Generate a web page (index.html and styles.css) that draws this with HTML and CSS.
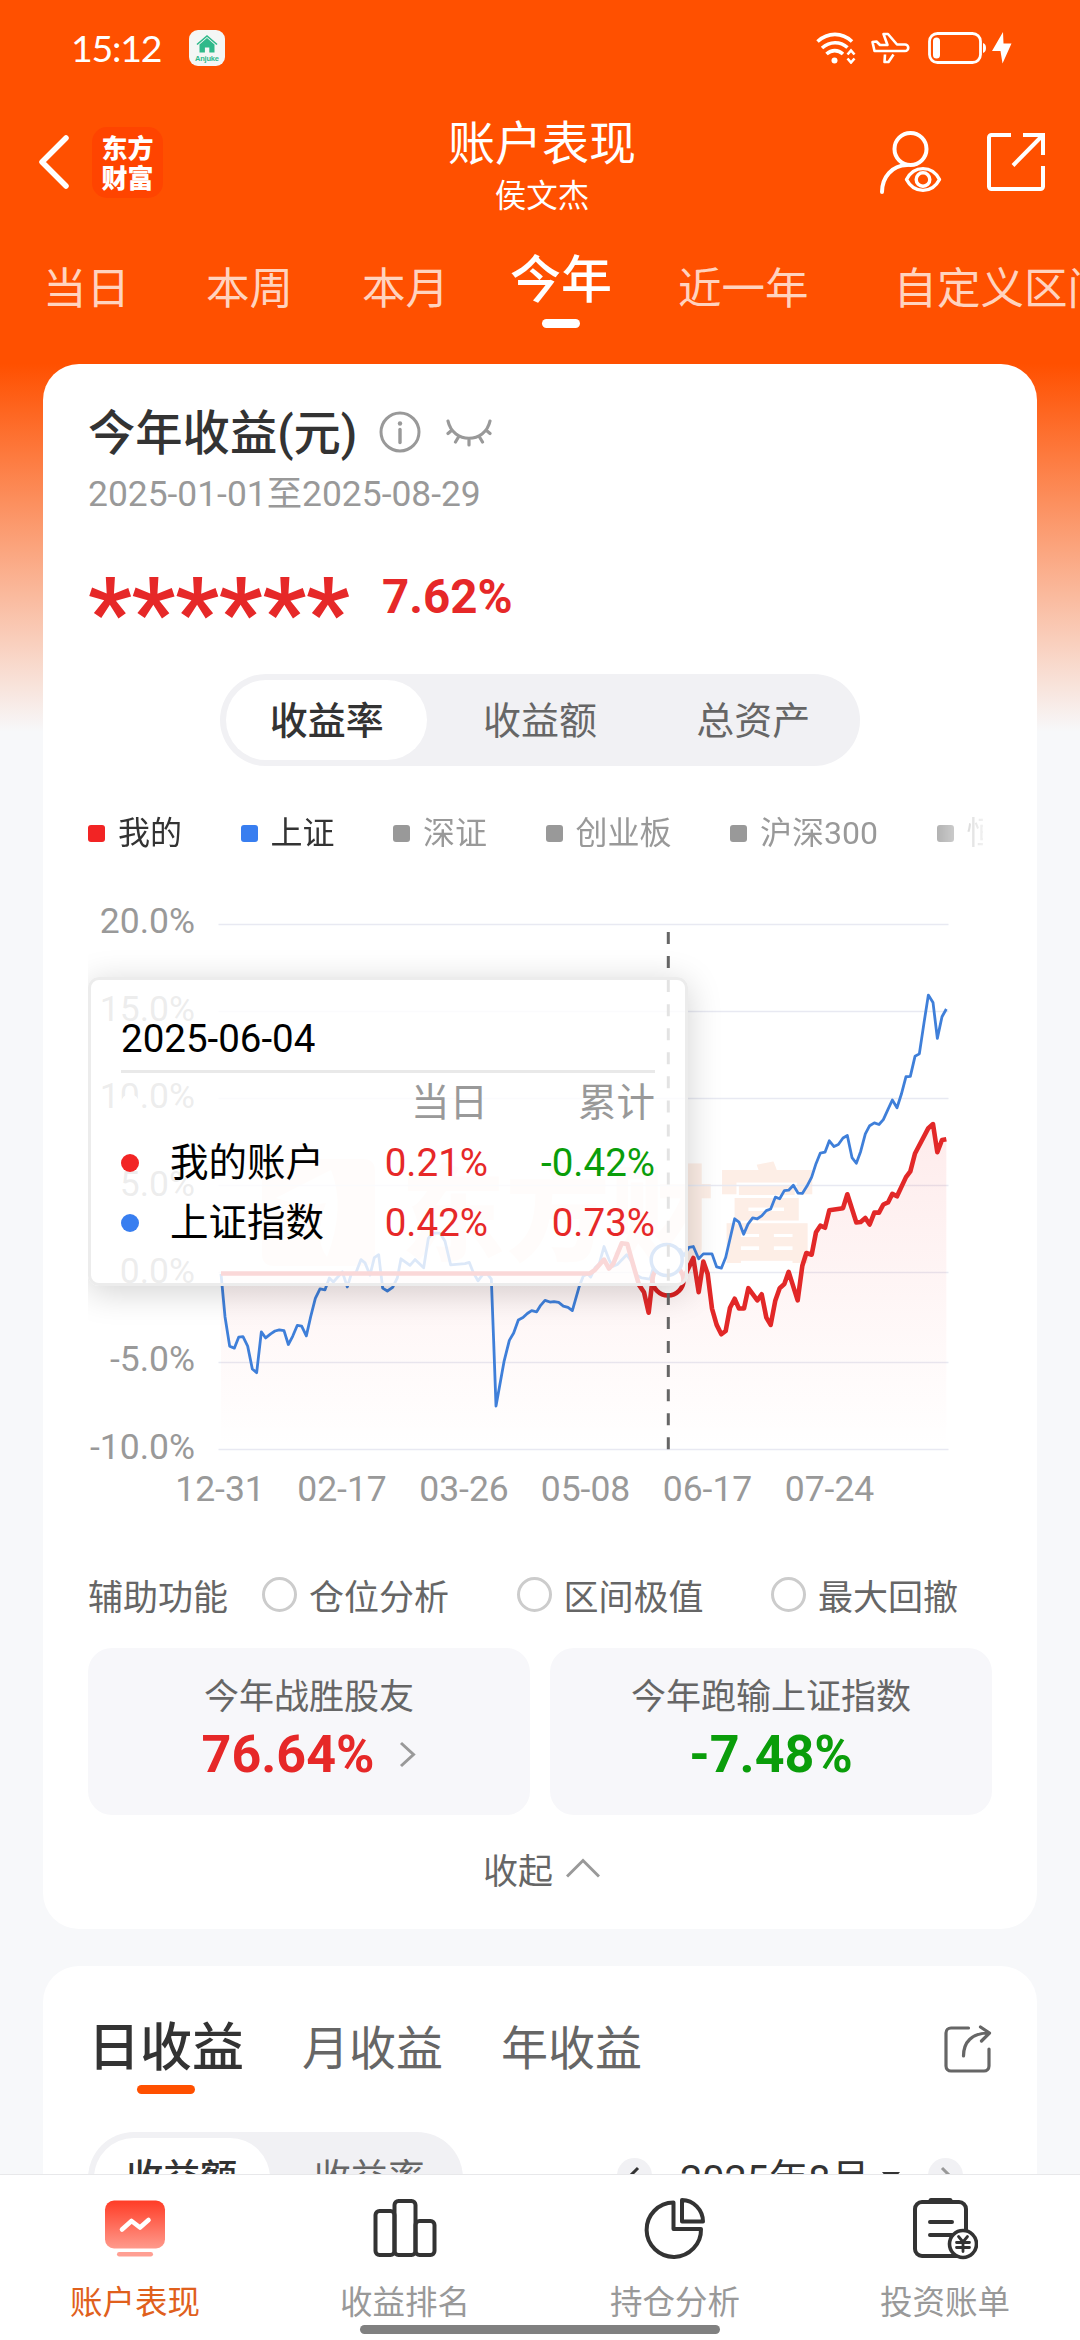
FILE: index.html
```html
<!DOCTYPE html>
<html lang="zh-CN">
<head>
<meta charset="utf-8">
<title>账户表现</title>
<link rel="stylesheet" href="styles.css">
</head>
<body>
<div class="app">
  <div class="status-bar">
    <span class="clock">15:12</span>
    <svg class="app-badge" viewBox="0 0 36 36">
      <rect width="36" height="36" rx="9" fill="#f4f6f5"/>
      <path d="M8 14.5 18 6l10 8.500" fill="none" stroke="#2fb98a" stroke-width="1.600"/>
      <path d="M10.500 14.500 18 8l7.500 6.500V22.500H20.300V17.500H15.900V22.500H10.500Z" fill="#2fb98a"/>
      <text x="18" y="30.500" text-anchor="middle" textLength="24" class="badge-text">Anjuke</text>
    </svg>
    <div class="status-icons">
      <svg width="40" height="32" viewBox="0 0 40 32" fill="none" stroke="#fff" stroke-width="3.600">
        <path d="M1.500 9.500C12 0 26 0 36 9.500M6 16C14 9 24 9 31.500 15.500M10.500 22C15.500 17.500 22 17.500 27 22"/>
        <circle cx="18.500" cy="28.500" r="3" fill="#fff" stroke="none"/>
        <path d="M31.500 22.500 35 18.500l3.500 4M31.500 26.500 35 30.500l3.500-4" stroke-width="2.600"/>
      </svg>
      <svg width="39" height="32" viewBox="0 0 39 32" fill="none" stroke="#fff" stroke-width="2.600" stroke-linejoin="round">
        <path d="M1.500 10 3.500 19H34a3.200 3.200 0 0 0 0-6.500H26L17 2H12.500L16.500 13H9L5.500 9.500ZM14 22.500 13.500 30H17.500L22.500 22.500"/>
      </svg>
      <svg class="battery" width="58" height="32" viewBox="0 0 58 32">
        <rect x="1.500" y="1.500" width="51" height="29" rx="8" fill="none" stroke="#fff" stroke-width="2.800"/>
        <rect x="5" y="5.500" width="7" height="21" rx="3.500" fill="#fff"/>
        <path d="M55 11c4 1 4 9 0 10Z" fill="#fff"/>
      </svg>
      <svg width="20" height="32" viewBox="0 0 20 32"><path d="M11 0 0 19H8.500L10.500 31.500 19.500 11.500H11.500Z" fill="#fff"/></svg>
    </div>
  </div>

  <header class="title-bar">
    <div class="title-side">
      <svg width="30" height="54" viewBox="0 0 30 54"><path d="M27 3 3 27l24 24" fill="none" stroke="#fff" stroke-width="5.500" stroke-linecap="round" stroke-linejoin="round"/></svg>
      <div class="brand"><span>东方</span><span>财富</span></div>
    </div>
    <div class="title-text">
      <h1>账户表现</h1>
      <p>侯文杰</p>
    </div>
    <div class="title-side title-actions">
      <svg width="63" height="63" viewBox="0 0 63 63" fill="none" stroke="#fff" stroke-width="4">
        <circle cx="31.500" cy="18" r="16"/>
        <path d="M3 61C3 46 13 34.500 28 34" stroke-linecap="round"/>
        <path d="M27.500 48.500C35 34 53 34 60.500 48.500C53 63 35 63 27.500 48.500Z" stroke-width="3.400" stroke-linejoin="round"/>
        <circle cx="44" cy="48.500" r="6.800" stroke-width="3.400"/>
      </svg>
      <svg width="58" height="58" viewBox="0 0 58 58" fill="none" stroke="#fff" stroke-width="4">
        <path d="M24 2H4.500A2.500 2.500 0 0 0 2 4.500V53.500A2.500 2.500 0 0 0 4.500 56H53.500A2.500 2.500 0 0 0 56 53.500V33M36 2H56V22M55 3 26 32.500"/>
      </svg>
    </div>
  </header>

  <nav class="period-tabs">
    <span class="p-day">当日</span>
    <span class="p-week">本周</span>
    <span class="p-month">本月</span>
    <span class="p-year active">今年</span>
    <span class="p-12m">近一年</span>
    <span class="p-custom">自定义区间</span>
  </nav>

  <main class="content">
    <section class="card summary">
      <div class="summary-head">
        <h2>今年收益(元)</h2>
        <svg class="info" width="42" height="42" viewBox="0 0 42 42" fill="none" stroke="#999" stroke-width="3">
          <circle cx="21" cy="21" r="19"/><path d="M21 18.500V31.500" stroke-linecap="round" stroke-width="3.400"/><circle cx="21" cy="12.500" r="2.200" fill="#999" stroke="none"/>
        </svg>
        <svg class="eye" width="46" height="28" viewBox="0 0 46 28" fill="none" stroke="#999" stroke-width="3.200" stroke-linecap="round">
          <path d="M2 2C7 25 39 25 44 2M5.500 11.500 2 14.500M12.500 18 9.500 23M23 20V26M33.500 18 36.500 23M40.500 11.500 44 14.500"/>
        </svg>
      </div>
      <p class="range">2025-01-01至2025-08-29</p>
      <div class="figures"><span class="masked">******</span><span class="rate">7.62%</span></div>

      <div class="segmented seg-main"><span class="on">收益率</span><span>收益额</span><span>总资产</span></div>

      <div class="legend">
        <span class="mine">我的</span><span class="sh">上证</span><span>深证</span><span>创业板</span><span>沪深300</span><span>恒生</span>
      </div>

      <div class="chart">
        <svg class="plot" viewBox="0 0 904 640">
          <defs>
            <linearGradient id="area" x1="0" y1="598" x2="0" y2="1395" gradientUnits="userSpaceOnUse">
              <stop offset="0" stop-color="#f22828" stop-opacity=".09"/><stop offset="1" stop-color="#f22828" stop-opacity="0"/>
            </linearGradient>
          </defs>
          <g class="watermark">
            <path d="M186 279H275Q287 279 287 291V374Q287 386 275 386H186Q174 386 174 374V291Q174 279 186 279ZM188 318Q219 302 243 290Q258 327 239 377Q225 359 238 323Q215 327 188 318Z" fill-rule="evenodd"/>
            <text x="313" y="373" textLength="418">东方财富</text>
          </g>
          <path class="grid" d="M130.500 44.500H860.500M130.500 131.500H860.500M130.500 218.500H860.500M130.500 305.500H860.500M130.500 392.500H860.500M130.500 482.500H860.500M130.500 569.500H860.500"/>
          <g class="axis axis-y">
            <text x="107" y="53">20.0%</text>
            <text x="107" y="140.500">15.0%</text>
            <text x="107" y="228">10.0%</text>
            <text x="107" y="315.500">5.0%</text>
            <text x="107" y="403">0.0%</text>
            <text x="107" y="490.500">-5.0%</text>
            <text x="107" y="578.500">-10.0%</text>
          </g>
          <g class="axis axis-x">
            <text x="132" y="620.500">12-31</text>
            <text x="254" y="620.500">02-17</text>
            <text x="376" y="620.500">03-26</text>
            <text x="497.500" y="620.500">05-08</text>
            <text x="619.500" y="620.500">06-17</text>
            <text x="741.500" y="620.500">07-24</text>
          </g>
          <g transform="translate(-28 0) scale(.333333 .40816)">
            <path fill="url(#area)" d="M483 964H1590L1605 955 1632 930 1647 952 1660 940 1685 890 1702 892 1715 930 1737 992 1752 1010 1766 1060 1778 975 1825 981 1880 960 1900 926 1916 1010 1930 935 1943 965 1956 1050 1970 1090 1984 1113 1997 1105 2010 1048 2024 1026 2037 1050 2052 1050 2065 1000 2092 1030 2105 1015 2119 1072 2132 1090 2146 1030 2159 1000 2173 990 2186 960 2213 1030 2227 945 2239 914 2255 918 2268 863 2281 847 2295 852 2308 809 2349 804 2362 770 2389 839 2402 838 2416 828 2429 844 2443 815 2457 815 2470 795 2484 790 2497 769 2511 775 2538 728 2551 714 2565 670 2605 608 2619 598 2632 667 2646 637 2659 635V1395H483Z"/>
            <path class="line-sh" d="M483 965 495 1070 509 1142 523 1147 536 1120 549 1119 563 1142 577 1198 590 1207 604 1107 617 1122 632 1112 645 1105 658 1102 672 1104 685 1138 698 1118 712 1091 725 1093 739 1117 752 1070 766 1025 780 1002 795 1004 808 975 820 985 847 960 862 997 874 965 888 962 903 930 915 938 930 968 943 925 956 918 968 1000 982 1007 998 998 1012 975 1023 928 1050 944 1065 930 1091 950 1105 878 1118 865 1140 865 1155 885 1172 943 1215 940 1228 937 1240 962 1254 982 1268 967 1282 965 1294 978 1301 1130 1308 1289 1332 1180 1348 1128 1361 1110 1375 1078 1389 1072 1402 1062 1415 1055 1430 1058 1442 1042 1455 1030 1470 1034 1482 1033 1496 1035 1510 1044 1524 1047 1537 1055 1558 995 1570 970 1583 965 1592 973 1605 950 1618 940 1632 898 1647 930 1658 947 1672 942 1700 918 1715 935 1730 968 1745 975 1770 978 1780 950 1821 931 1860 905 1872 920 1887 900 1900 898 1916 928 1930 916 1956 916 1970 948 1984 951 1997 925 2024 830 2037 838 2051 868 2064 843 2078 828 2092 830 2105 823 2119 810 2132 806 2146 777 2159 781 2173 761 2186 760 2200 748 2214 767 2227 768 2241 750 2255 728 2268 695 2281 669 2295 667 2308 639 2322 653 2335 648 2349 632 2362 626 2376 680 2389 694 2402 665 2416 622 2429 602 2443 595 2457 599 2470 587 2484 562 2497 539 2511 558 2524 525 2538 482 2551 481 2565 432 2578 426 2592 350 2605 282 2619 300 2632 388 2646 335 2659 316"/>
            <path class="line-mine" d="M483 964H1590L1605 955 1632 930 1647 952 1660 940 1685 890 1702 892 1715 930 1737 992 1752 1010 1766 1060 1778 975 1790 972M1870 975 1880 960 1900 926 1916 1010 1930 935 1943 965 1956 1050 1970 1090 1984 1113 1997 1105 2010 1048 2024 1026 2037 1050 2052 1050 2065 1000 2092 1030 2105 1015 2119 1072 2132 1090 2146 1030 2159 1000 2173 990 2186 960 2213 1030 2227 945 2239 914 2255 918 2268 863 2281 847 2295 852 2308 809 2349 804 2362 770 2389 839 2402 838 2416 828 2429 844 2443 815 2457 815 2470 795 2484 790 2497 769 2511 775 2538 728 2551 714 2565 670 2605 608 2619 598 2632 667 2646 637 2659 635"/>
          </g>
          <circle class="mark-mine" cx="580" cy="400" r="15.500"/>
          <circle class="mark-sh" cx="578.700" cy="380" r="15.500"/>
          <path class="cursor" d="M580.300 52V569.500"/>
        </svg>
        <div class="tooltip">
          <div class="tip-date">2025-06-04</div>
          <div class="tip-row tip-head"><i></i><span></span><b>当日</b><b>累计</b></div>
          <div class="tip-row tip-mine"><i></i><span>我的账户</span><b class="up">0.21%</b><b class="down">-0.42%</b></div>
          <div class="tip-row tip-sh"><i></i><span>上证指数</span><b class="up">0.42%</b><b class="up">0.73%</b></div>
        </div>
      </div>

      <div class="aux">
        <span class="aux-title">辅助功能</span>
        <label><i></i>仓位分析</label><label><i></i>区间极值</label><label><i></i>最大回撤</label>
      </div>

      <div class="stats">
        <div class="stat">
          <p>今年战胜股友</p>
          <div class="stat-value up">76.64%<svg width="17" height="27" viewBox="0 0 17 27"><path d="M2 2 14.500 13.500 2 25" fill="none" stroke="#999" stroke-width="3"/></svg></div>
        </div>
        <div class="stat">
          <p>今年跑输上证指数</p>
          <div class="stat-value down">-7.48%</div>
        </div>
      </div>

      <div class="collapse">收起<svg width="34" height="20" viewBox="0 0 34 20"><path d="M1 18.500 17 2.500l16 16" fill="none" stroke="#999" stroke-width="3"/></svg></div>
    </section>

    <section class="card calendar">
      <div class="cal-tabs">
        <span class="active">日收益</span><span>月收益</span><span>年收益</span>
        <svg width="48" height="48" viewBox="0 0 48 48" fill="none" stroke="#666" stroke-width="3.200" stroke-linecap="round" stroke-linejoin="round">
          <path d="M24.500 3H7A5 5 0 0 0 2 8V41A5 5 0 0 0 7 46H40A5 5 0 0 0 45 41V24M19.500 31C19.500 17 28 8 44.500 8M36.500 2 45.500 8 37.500 16"/>
        </svg>
      </div>
      <div class="cal-bar">
        <div class="segmented seg-cal"><span class="on">收益额</span><span>收益率</span></div>
        <div class="month">
          <svg width="35" height="35" viewBox="0 0 35 35"><circle cx="17.500" cy="17.500" r="17.500" fill="#f1f1f4"/><path d="M21 10 13.500 17.500 21 25" fill="none" stroke="#333" stroke-width="3"/></svg>
          <span>2025年8月</span>
          <svg class="caret" width="18" height="11" viewBox="0 0 18 11"><path d="M0 0H18L9 11Z" fill="#333"/></svg>
          <svg width="35" height="35" viewBox="0 0 35 35"><circle cx="17.500" cy="17.500" r="17.500" fill="#f1f1f4"/><path d="M14 10 21.500 17.500 14 25" fill="none" stroke="#999" stroke-width="3"/></svg>
        </div>
      </div>
    </section>
  </main>

  <nav class="bottom-nav">
    <div class="nav-items">
      <a class="active">
        <svg width="66" height="66" viewBox="0 0 66 66">
          <defs><linearGradient id="screen" x1="0" y1="0" x2="0" y2="1"><stop offset="0" stop-color="#ff3c26"/><stop offset="1" stop-color="#ff9a8c"/></linearGradient></defs>
          <rect x="3" y="4.500" width="60" height="48" rx="9" fill="url(#screen)"/>
          <rect x="15" y="56" width="36" height="4.500" rx="2.200" fill="#ff9f93"/>
          <path d="M20 33.500 29.500 25 38 31.500 46.500 24" fill="none" stroke="#fff" stroke-width="4.600" stroke-linecap="round" stroke-linejoin="round"/>
        </svg>
        <span>账户表现</span>
      </a>
      <a>
        <svg width="66" height="66" viewBox="0 0 66 66" fill="none" stroke="#333" stroke-width="4">
          <rect x="3.500" y="15" width="19" height="44" rx="4"/><rect x="22.500" y="5" width="21" height="54" rx="4"/><rect x="43.500" y="25" width="19" height="34" rx="4"/>
        </svg>
        <span>收益排名</span>
      </a>
      <a>
        <svg width="66" height="66" viewBox="0 0 66 66" fill="none" stroke="#333" stroke-width="4" stroke-linejoin="round">
          <path d="M31.500 6.500A27.200 27.200 0 1 0 59 33H31.500Z"/><path d="M40 4A21.500 22 0 0 1 61 25.500H40Z"/>
        </svg>
        <span>持仓分析</span>
      </a>
      <a>
        <svg width="66" height="66" viewBox="0 0 66 66" fill="none" stroke="#333" stroke-width="4" stroke-linecap="round">
          <path d="M45 60H10A7 7 0 0 1 3 53V13A7 7 0 0 1 10 6H47A7 7 0 0 1 54 13V35"/>
          <path d="M19 4.500H38" stroke-width="5"/><path d="M18 26H40M18 39H40"/>
          <circle cx="51" cy="48" r="13.500" fill="#fff" stroke-width="3.600"/>
          <path d="M46.500 40.500 51 46 55.500 40.500M51 46V55.500M44.500 46.500H57.500M44.500 51.500H57.500" stroke-width="2.800"/>
        </svg>
        <span>投资账单</span>
      </a>
    </div>
    <div class="home-bar"></div>
  </nav>
</div>
</body>
</html>
```
FILE: styles.css
```css
* { box-sizing: border-box; margin: 0; padding: 0; }

body {
  width: 1080px;
  height: 2340px;
  overflow: hidden;
  font-family: Roboto, "Noto Sans CJK SC", sans-serif;
  color: #333;
}
i, b { font-style: normal; font-weight: 400; }
svg { display: block; flex: none; }

.app {
  height: 2340px;
  display: flex;
  flex-direction: column;
  background: linear-gradient(#ff5000 364px, #f7f8fa 732px);
}

/* status bar */
.status-bar {
  height: 96px;
  flex: none;
  display: flex;
  align-items: center;
  padding: 0 68px 0 71px;
}
.clock {
  width: 118px;
  font: 400 37.500px/60px Lato, sans-serif;
  letter-spacing: -1.200px;
  color: #fff;
}
.app-badge { width: 36px; height: 36px; }
.badge-text { font: 700 7.5px "Liberation Sans", sans-serif; fill: #2fb98a; }
.status-icons { margin-left: auto; display: flex; align-items: center; gap: 15px; }
.status-icons .battery { margin: 0 -9px 0 3px; }

/* title bar */
.title-bar {
  height: 132px;
  flex: none;
  display: grid;
  grid-template-columns: 1fr auto 1fr;
  align-items: center;
  padding: 0 35px 0 39px;
}
.title-side { display: flex; align-items: center; gap: 23px; }
.title-actions { justify-content: flex-end; gap: 45px; }
.brand {
  width: 71px;
  height: 71px;
  padding-top: 5px;
  border-radius: 15px;
  background: #ff4400;
  color: #fff;
  display: flex;
  flex-direction: column;
  align-items: center;
  font: 900 26px/30px "Noto Sans CJK SC", sans-serif;
}
.title-text { padding-top: 8px; text-align: center; color: #fff; }
.title-text h1 { font-size: 47px; font-weight: 400; line-height: 60px; }
.title-text p { font-size: 31.5px; line-height: 45px; }

/* period tabs */
.period-tabs {
  height: 136px;
  flex: none;
  display: flex;
  padding-left: 43px;
  overflow: hidden;
  white-space: nowrap;
  font-size: 43.5px;
  line-height: 123px;
  color: rgba(255, 255, 255, .76);
}
.period-tabs span { flex: none; }
.p-week { margin-left: 76px; }
.p-month { margin-left: 69px; }
.p-year { margin-left: 61px; }
.p-12m { margin-left: 66px; }
.p-custom { margin-left: 85px; }
.period-tabs .active {
  display: flex;
  flex-direction: column;
  align-items: center;
  font-size: 51px;
  font-weight: 500;
  line-height: 91px;
  padding-top: 7px;
  color: #fff;
}
.period-tabs .active::after {
  content: "";
  width: 38px;
  height: 9px;
  margin-top: -7px;
  border-radius: 5px;
  background: #fff;
}

/* cards */
.content {
  flex: 1;
  min-height: 0;
  overflow: hidden;
  padding: 0 43px;
  display: flex;
  flex-direction: column;
  gap: 37px;
}
.card { flex: none; border-radius: 36px; background: #fff; padding: 0 45px; }
.up { color: #e62828; }
.down { color: #0a9d0a; }

.summary { height: 1565px; padding-top: 39px; }
.summary-head { display: flex; align-items: center; height: 62px; }
.summary-head h2 { font-size: 47.300px; font-weight: 500; line-height: 62px; }
.summary-head .info { margin: -4px 25px 0 22px; }
.summary-head .eye { margin-top: -3px; }
.range { font-size: 35.400px; line-height: 58px; color: #999; }
.figures {
  display: flex;
  align-items: center;
  height: 60px;
  margin-top: 44px;
  color: #e62828;
}
.masked { width: 258px; font-size: 96px; line-height: 60px; font-weight: 700; height: 60px; padding-top: 16px; }
.rate { margin-left: 36px; font-size: 47.5px; font-weight: 700; }

.segmented {
  display: flex;
  height: 92px;
  border-radius: 46px;
  background: #f1f1f4;
  font-size: 38px;
  line-height: 82px;
  color: #666;
  text-align: center;
}
.segmented span { flex: 1; margin: 6px; border-radius: 40px; height: 80px; }
.segmented .on { background: #fff; color: #333; font-weight: 500; }
.seg-main { width: 640px; margin: 47px auto 0; }

.legend {
  display: flex;
  gap: 58.500px;
  height: 50px;
  margin-top: 42px;
  width: 895px;
  overflow: hidden;
  white-space: nowrap;
  font-size: 32px;
  line-height: 52px;
  color: #999;
  -webkit-mask-image: linear-gradient(90deg, #000 830px, transparent 905px);
  mask-image: linear-gradient(90deg, #000 830px, transparent 905px);
}
.legend span { flex: none; display: flex; align-items: center; gap: 13px; }
.legend span::before { content: ""; width: 17px; height: 17px; border-radius: 3px; background: #999; }
.legend .mine, .legend .sh { color: #333; }
.legend .mine::before { background: #f22424; }
.legend .sh::before { background: #387ef0; }

/* chart */
.chart { position: relative; width: 904px; height: 640px; margin-top: 22px; overflow: hidden; }
.plot { width: 904px; height: 640px; }
.watermark { fill: #fdeee6; }
.watermark text { font: 900 104px "Noto Sans CJK SC", sans-serif; }
.grid { stroke: #e8e9f2; stroke-width: 1.500; fill: none; }
.axis { fill: #999; font-size: 35.500px; }
.axis-y { text-anchor: end; }
.axis-x { text-anchor: middle; }
.line-sh, .line-mine { fill: none; stroke-linejoin: round; vector-effect: non-scaling-stroke; }
.line-sh { stroke: #3f7fd9; stroke-width: 2.800; }
.line-mine { stroke: #e22828; stroke-width: 4.600; }
.mark-mine { fill: #fff; stroke: #d92020; stroke-width: 4.600; }
.mark-sh { fill: #fff; stroke: #3f7fd9; stroke-width: 3.500; }
.cursor { stroke: #666; stroke-width: 3; stroke-dasharray: 12 12.060; }

.tooltip {
  position: absolute;
  left: 0;
  top: 97px;
  width: 600px;
  height: 309px;
  padding: 0 30px;
  border: 3px solid #ececec;
  border-radius: 11px;
  background: rgba(255, 255, 255, .82);
  box-shadow: 0 6px 34px rgba(0, 0, 0, .18);
  color: #000;
  font-size: 38.500px;
  white-space: nowrap;
}
.tip-date { height: 93px; padding-top: 36px; line-height: 46px; border-bottom: 3px solid #e9e9e9; }
.tip-row { display: grid; grid-template-columns: 49px 170px 148px 167px; align-items: center; height: 60px; line-height: 60px; }
.tip-row i { width: 18px; height: 18px; border-radius: 50%; background: #fff; }
.tip-row b { text-align: right; }
.tip-head { color: #999; }
.tip-mine i { background: #f22424; }
.tip-sh i { background: #387ef0; }

/* helpers and stats */
.aux {
  display: flex;
  align-items: center;
  height: 60px;
  margin-top: 44px;
  font-size: 35px;
  color: #666;
  white-space: nowrap;
}
.aux-title { margin-right: 34px; }
.aux label { display: flex; align-items: center; gap: 12px; margin-right: 67.500px; }
.aux label:last-child { margin-right: 0; }
.aux i { width: 35px; height: 35px; border: 3px solid #ccc; border-radius: 50%; }

.stats { display: grid; grid-template-columns: 1fr 1fr; gap: 20px; margin-top: 24px; }
.stat { height: 167px; padding-top: 24px; border-radius: 24px; background: #f7f7fa; text-align: center; }
.stat p { font-size: 35px; line-height: 52px; color: #666; }
.stat-value { display: flex; justify-content: center; align-items: center; gap: 25px; height: 60px; font-size: 52px; font-weight: 700; }

.collapse { display: flex; align-items: center; justify-content: center; gap: 13px; height: 60px; margin-top: 23px; padding-left: 3px; font-size: 35px; color: #666; }

/* calendar card */
.calendar { height: 400px; }
.cal-tabs { display: flex; align-items: center; height: 166px; font-size: 47px; color: #666; }
.cal-tabs span { margin-right: 58px; line-height: 166px; }
.cal-tabs svg { margin-left: auto; }
.cal-tabs .active {
  display: flex;
  flex-direction: column;
  align-items: center;
  height: 166px;
  font-size: 52px;
  font-weight: 500;
  color: #333;
}
.cal-tabs .active::after { content: ""; flex: none; width: 58px; height: 9px; margin-top: -47px; border-radius: 5px; background: #ff5000; }
.cal-bar { display: flex; align-items: center; justify-content: space-between; }
.seg-cal { width: 375px; font-size: 37px; }
.month { display: flex; align-items: center; padding-right: 29px; margin-top: -6px; font-size: 39.500px; }
.month span { margin-left: 28px; }
.month .caret { margin: 4px 28px 0 12px; }

/* bottom navigation */
.bottom-nav { flex: none; height: 166px; border-top: 1px solid #e8e8ea; background: #fff; }
.nav-items { display: grid; grid-template-columns: repeat(4, 1fr); height: 150px; padding-top: 21px; }
.nav-items a { display: flex; flex-direction: column; align-items: center; gap: 18px; font-size: 32.500px; line-height: 46px; color: #999; }
.nav-items .active { color: #e0601c; }
.home-bar { width: 360px; height: 9px; margin: 0 auto; border-radius: 5px; background: #808080; }
```
